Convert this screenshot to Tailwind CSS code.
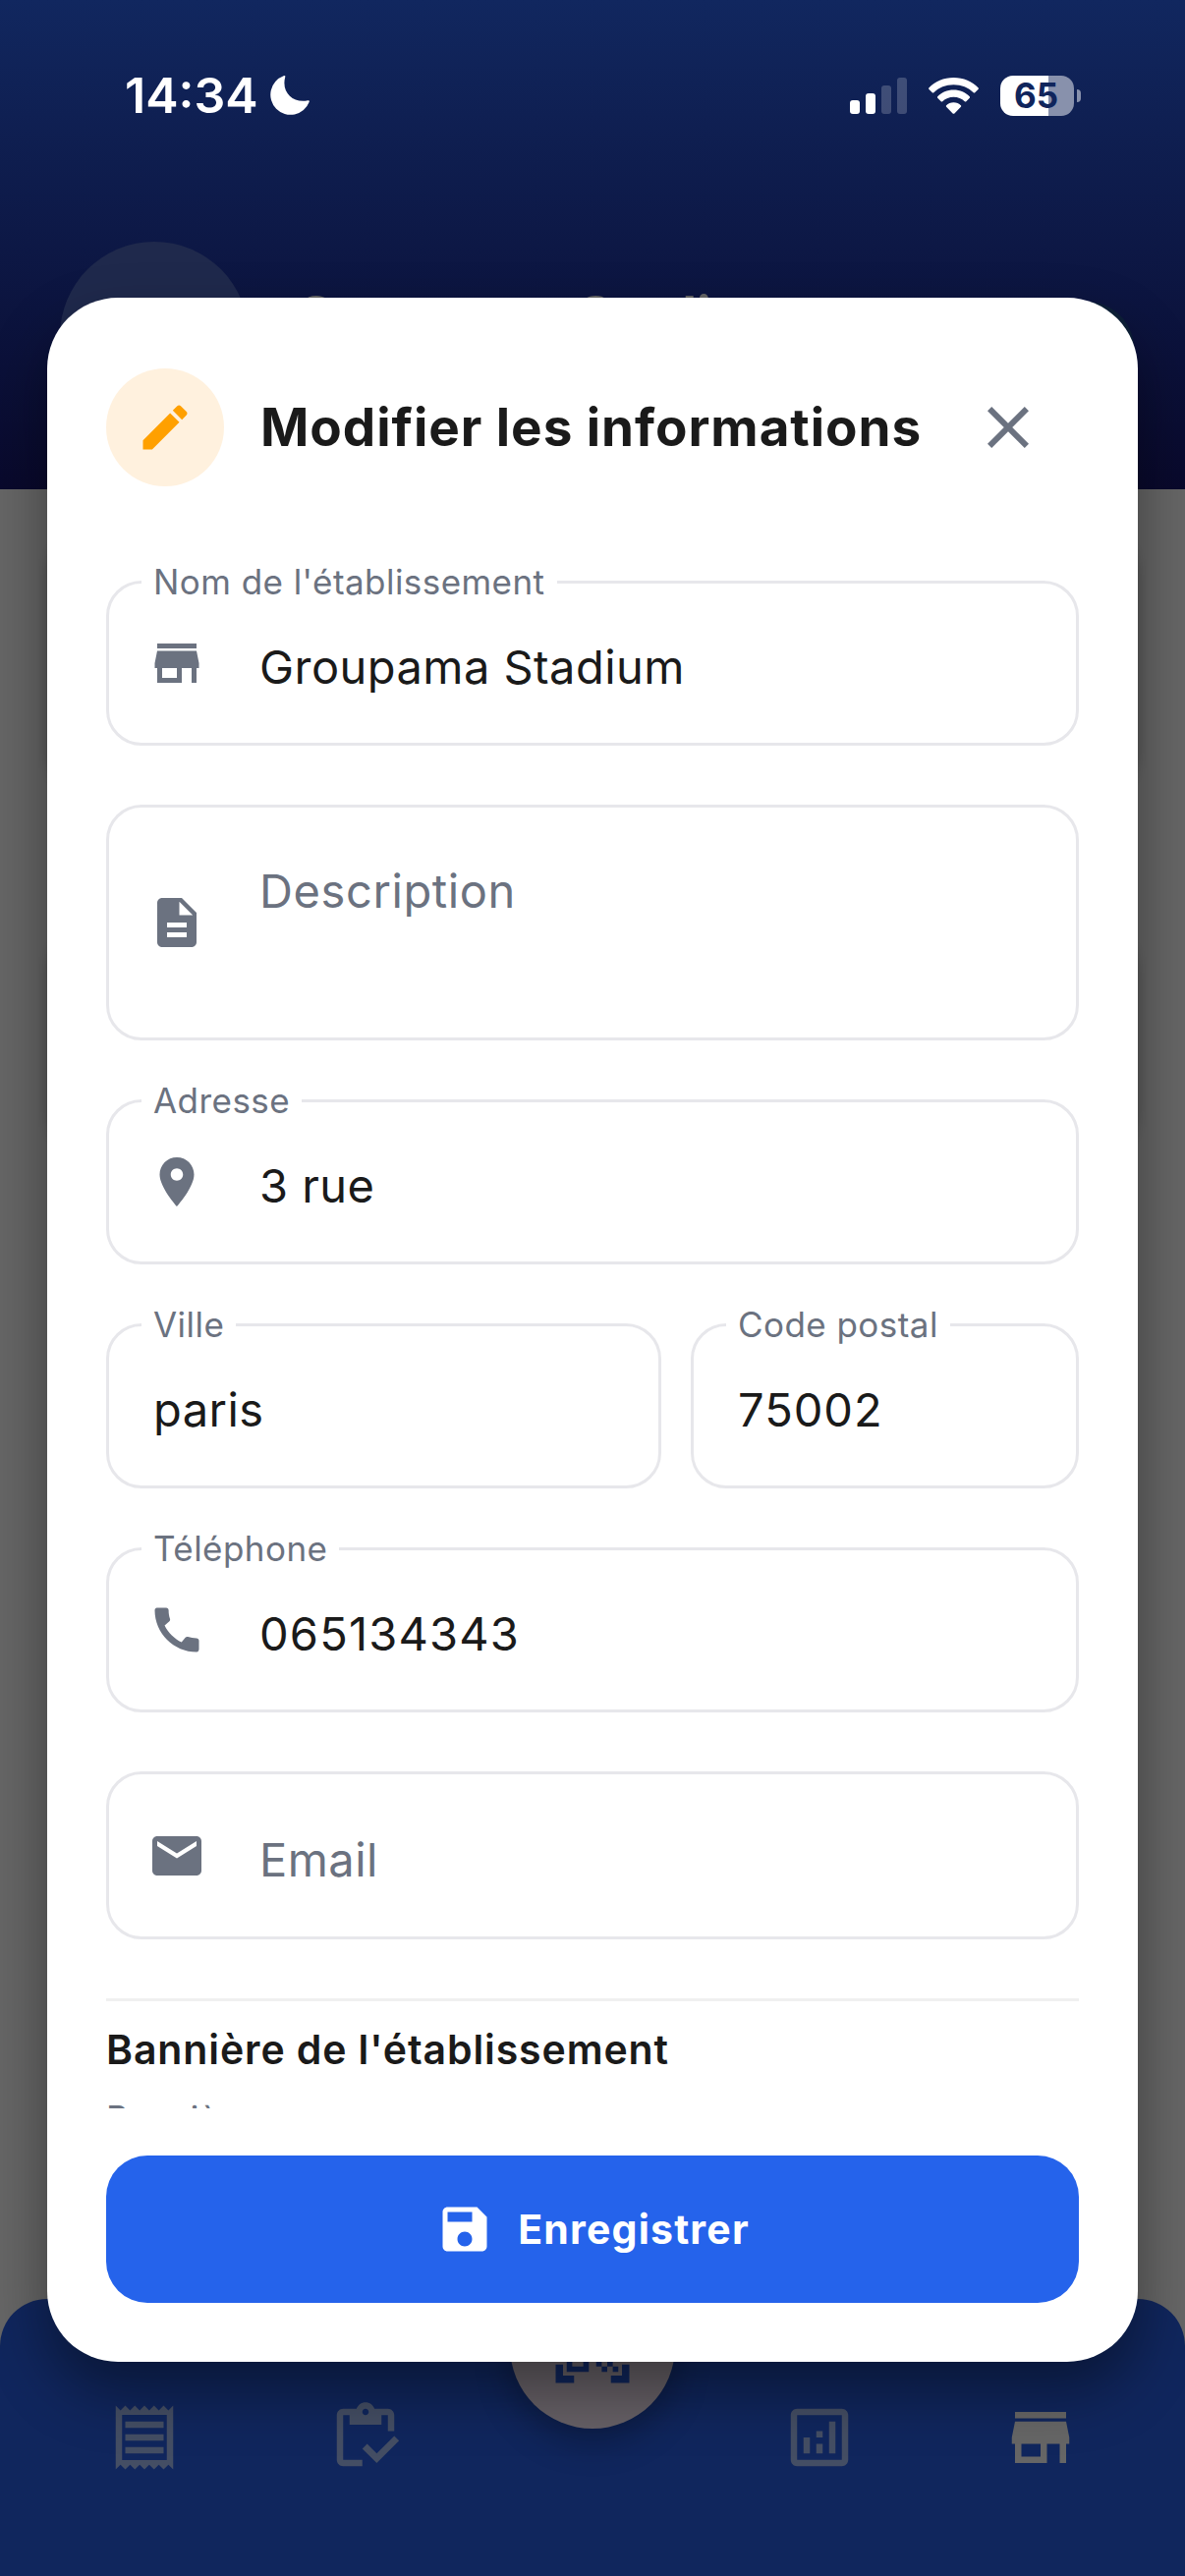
<!DOCTYPE html>
<html lang="fr">
<head>
    <meta charset="UTF-8">
    <meta name="viewport" content="width=device-width, initial-scale=1.0">
    <title>Modifier les informations</title>
    <script src="https://cdn.jsdelivr.net/npm/@tailwindcss/browser@4"></script>
</head>
<body class="relative w-[1206px] h-[2622px] overflow-hidden bg-[#666666] font-['Inter','Liberation_Sans',sans-serif]">
    <!-- Dimmed page behind the dialog -->
    <div class="flex h-full flex-col">
        <header class="h-[498px] shrink-0 bg-linear-to-b/srgb from-[#11275f] to-[#09092c]">
            <!-- Status bar -->
            <div class="flex h-[194px] items-center pl-[127px] pr-[106px] text-white">
                <span class="w-[148px] text-[50px] font-semibold leading-none">14:34</span>
                <svg class="h-10 w-10" viewBox="0 0 40 40" fill="currentColor"><path d="M15.200 1.500C15.800.2 14.800-.3 13.600.3A20.400 20.400 0 1 0 39.700 26.800c.5-1.200-.2-1.900-1.400-1.600C24 28.500 11 17.500 15.200 1.500z"/></svg>
                <div class="ml-auto flex items-center">
                    <div class="mr-[22px] flex h-[37px] items-end gap-[6px]">
                        <span class="h-[14px] w-[10px] rounded-[3px] bg-white"></span>
                        <span class="h-[21px] w-[10px] rounded-[3px] bg-white"></span>
                        <span class="h-[29px] w-[10px] rounded-[3px] bg-white/20"></span>
                        <span class="h-[37px] w-[10px] rounded-[3px] bg-white/20"></span>
                    </div>
                    <svg class="mr-[22px] h-[37px] w-[51px]" viewBox="0 0 51 37" fill="currentColor">
                        <path d="M25.500 0C35.500 0 44.500 4 50.500 10.300c.6.6.6 1 0 1.600l-3.300 3.300c-.5.5-1 .5-1.500 0C40.500 10.300 33.500 7.300 25.500 7.300S10.500 10.300 5.300 15.200c-.5.5-1 .5-1.500 0L.5 11.900c-.6-.6-.6-1 0-1.600C6.500 4 15.500 0 25.500 0z"/>
                        <path d="M25.500 12.500c6.500 0 12.300 2.600 16.300 6.700.5.500.5 1 0 1.500l-3.500 3.500c-.5.500-1 .5-1.500 0-3-2.700-6.900-4.400-11.300-4.400s-8.300 1.700-11.300 4.400c-.5.500-1 .5-1.500 0l-3.500-3.500c-.5-.5-.5-1 0-1.500 4-4.100 9.800-6.700 16.300-6.700z"/>
                        <path d="M25.500 25.300c3 0 5.600 1.100 7.400 2.900.5.500.5 1 0 1.500l-6.500 6.700c-.6.600-1.200.6-1.800 0l-6.500-6.700c-.5-.5-.5-1 0-1.500 1.800-1.800 4.400-2.900 7.400-2.900z"/>
                    </svg>
                    <div class="flex h-[41px] w-[75px] items-center justify-center rounded-[13px] bg-linear-to-r/srgb from-white from-[65%] to-[#8891ac] to-[65%] pr-[2px] text-[35px] font-bold leading-none text-[#10255c]">65</div>
                    <span class="ml-[3px] h-[13px] w-[4px] rounded-r-full bg-[#8891ac]"></span>
                </div>
            </div>
            <!-- Establishment header -->
            <div class="flex items-center pl-[61px] pr-[52px] pt-[52px]">
                <div class="h-[192px] w-[192px] rounded-full bg-[#1f294c]"></div>
                <div class="ml-[48px] mt-[-42px] text-[54px] font-bold leading-none text-[#666666]">Groupama Stadium</div>
                <div class="ml-auto mt-[26px] h-[96px] w-[96px] rounded-full bg-[#0d2038]"></div>
            </div>
        </header>

        <!-- Content cards -->
        <main class="flex flex-1 flex-col px-[48px] pt-[40px]">
            <div class="h-[275px] rounded-[48px] bg-[#666666] shadow-[0_0_12px_rgba(0,0,0,0.2)]"></div>
            <div class="mt-[130px] h-[235px] rounded-[48px] bg-[#666666] shadow-[0_0_12px_rgba(0,0,0,0.2)]"></div>
        </main>

        <nav class="relative h-[282px] shrink-0 rounded-t-[48px] bg-[#10265d]">
            <div class="flex px-[108px] pt-[102px] text-[#444e64]">
                <svg class="h-[78px] w-[78px]" viewBox="0 0 24 24" fill="currentColor"><path d="M19.500 3.500L18 2l-1.500 1.500L15 2l-1.500 1.500L12 2l-1.500 1.500L9 2 7.500 3.500 6 2 4.500 3.500 3 2v20l1.500-1.500L6 22l1.500-1.500L9 22l1.500-1.500L12 22l1.500-1.500L15 22l1.500-1.500L18 22l1.500-1.500L21 22V2l-1.500 1.500zM19 19.090H5V4.910h14v14.180zM6 15h12v2H6zm0-4h12v2H6zm0-4h12v2H6z"/></svg>
                <svg class="ml-[147px] h-[78px] w-[78px]" viewBox="0 0 24 24" fill="currentColor"><path d="M5 5h2v3h10V5h2v5h2V5c0-1.100-.9-2-2-2h-4.180C14.400 1.840 13.300 1 12 1s-2.400.84-2.820 2H5c-1.100 0-2 .9-2 2v14c0 1.100.9 2 2 2h6v-2H5V5zm7-2c.55 0 1 .45 1 1s-.45 1-1 1-1-.45-1-1 .45-1 1-1z"/><path d="M21 11.500L15.510 17l-3.010-3-1.500 1.500 4.510 4.500 7-7z"/></svg>
                <svg class="ml-auto h-[78px] w-[78px]" viewBox="0 0 24 24" fill="currentColor"><path d="M19 3H5c-1.100 0-2 .9-2 2v14c0 1.100.9 2 2 2h14c1.100 0 2-.9 2-2V5c0-1.100-.9-2-2-2zm0 16H5V5h14v14z"/><path d="M7 12h2v5H7zM15 7h2v10h-2zM11 14h2v3h-2zM11 10h2v2h-2z"/></svg>
                <svg class="ml-[147px] h-[78px] w-[78px] text-[#666666]" viewBox="0 0 24 24" fill="currentColor"><path d="M20 4H4v2h16V4zm1 10v-2l-1-5H4l-1 5v2h1v6h10v-6h4v6h2v-6h1zm-9 4H6v-4h6v4z"/></svg>
            </div>
            <!-- Scan button -->
            <div class="absolute left-1/2 top-[-36px] flex h-[168px] w-[168px] -translate-x-1/2 items-center justify-center rounded-full bg-[#666066] text-[#10265d] shadow-[0_12px_36px_rgba(0,0,0,0.3)]">
                <svg class="h-[90px] w-[90px]" viewBox="0 0 24 24" fill="currentColor"><path d="M9.500 6.500v3h-3v-3h3M11 5H5v6h6V5zM9.500 14.500v3h-3v-3h3M11 13H5v6h6v-6zM17.500 6.500v3h-3v-3h3M19 5h-6v6h6V5zM13 13h1.500v1.500H13zM14.500 14.500H16V16h-1.500zM16 13h1.500v1.500H16zM13 16h1.500v1.500H13zM14.500 17.500H16V19h-1.500zM16 16h1.500v1.500H16zM17.500 14.500H19V16h-1.500zM17.500 17.500H19V19h-1.500zM22 7h-2V4h-3V2h5v5zM22 22v-5h-2v3h-3v2h5zM2 22h5v-2H4v-3H2v5zM2 2v5h2V4h3V2H2z"/></svg>
            </div>
        </nav>
    </div>

    <!-- Edit dialog -->
    <div class="absolute left-[48px] top-[303px] flex h-[2101px] w-[1110px] flex-col rounded-[72px] bg-white px-[60px] pt-[72px] pb-[60px] shadow-[0_30px_60px_rgba(0,0,0,0.4)]">
        <div class="flex items-center">
            <div class="flex h-[120px] w-[120px] items-center justify-center rounded-full bg-[#fff1de]">
                <svg class="h-[60px] w-[60px] text-[#ffa000]" viewBox="0 0 24 24" fill="currentColor"><path d="M3 17.250V21h3.750L17.810 9.940l-3.750-3.750L3 17.250zM20.710 7.040c.39-.39.39-1.020 0-1.410l-2.340-2.340c-.39-.39-1.020-.39-1.410 0l-1.830 1.830 3.750 3.750 1.830-1.830z"/></svg>
            </div>
            <h1 class="ml-[37px] whitespace-nowrap text-[53px] font-bold leading-none tracking-[0.95px] text-[#1a1a1a]">Modifier les informations</h1>
            <svg class="ml-auto mr-9 h-[72px] w-[72px] text-[#6b7280]" viewBox="0 0 24 24" fill="currentColor"><path d="M19 6.410L17.590 5 12 10.590 6.410 5 5 6.410 10.590 12 5 17.590 6.410 19 12 13.410 17.590 19 19 17.590 13.410 12z"/></svg>
        </div>

        <div class="mt-[96px] flex h-[1555px] flex-col text-[47px] leading-none tracking-[0.45px] text-[#1a1a1a]">
            <div class="relative flex h-[168px] shrink-0 items-center rounded-[36px] border-[3px] border-[#e7e7eb] px-[39px]">
                <span class="absolute left-[33px] top-[-23px] bg-white px-[12px] text-[35px] leading-[42px] text-[#6b7280]">Nom de l'établissement</span>
                <svg class="h-[60px] w-[60px] text-[#6b7280]" viewBox="0 0 24 24" fill="currentColor"><path d="M20 4H4v2h16V4zm1 10v-2l-1-5H4l-1 5v2h1v6h10v-6h4v6h2v-6h1zm-9 4H6v-4h6v4z"/></svg>
                <span class="ml-[54px] pt-[6px]">Groupama Stadium</span>
            </div>

            <div class="mt-[60px] flex h-[240px] shrink-0 items-center rounded-[36px] border-[3px] border-[#e7e7eb] px-[39px]">
                <svg class="h-[60px] w-[60px] text-[#6b7280]" viewBox="0 0 24 24" fill="currentColor"><path d="M14 2H6c-1.100 0-1.990.9-1.990 2L4 20c0 1.100.89 2 1.990 2H18c1.100 0 2-.9 2-2V8l-6-6zm2 16H8v-2h8v2zm0-4H8v-2h8v2zm-3-5V3.500L18.500 9H13z"/></svg>
                <span class="ml-[54px] pb-[66px] tracking-[0.6px] text-[#6b7280]">Description</span>
            </div>

            <div class="relative mt-[60px] flex h-[168px] shrink-0 items-center rounded-[36px] border-[3px] border-[#e7e7eb] px-[39px]">
                <span class="absolute left-[33px] top-[-23px] bg-white px-[12px] text-[35px] leading-[42px] text-[#6b7280]">Adresse</span>
                <svg class="h-[60px] w-[60px] text-[#6b7280]" viewBox="0 0 24 24" fill="currentColor"><path d="M12 2C8.130 2 5 5.130 5 9c0 5.250 7 13 7 13s7-7.750 7-13c0-3.870-3.130-7-7-7zm0 9.500c-1.380 0-2.500-1.120-2.500-2.500s1.120-2.500 2.500-2.500 2.500 1.120 2.500 2.500-1.120 2.500-2.500 2.500z"/></svg>
                <span class="ml-[54px] pt-[6px]">3 rue</span>
            </div>

            <div class="mt-[60px] flex shrink-0 gap-[30px]">
                <div class="relative flex h-[168px] w-[565px] items-center rounded-[36px] border-[3px] border-[#e7e7eb] px-[45px]">
                    <span class="absolute left-[33px] top-[-23px] bg-white px-[12px] text-[35px] leading-[42px] text-[#6b7280]">Ville</span>
                    <span class="pt-[6px]">paris</span>
                </div>
                <div class="relative flex h-[168px] flex-1 items-center rounded-[36px] border-[3px] border-[#e7e7eb] px-[45px]">
                    <span class="absolute left-[33px] top-[-23px] bg-white px-[12px] text-[35px] leading-[42px] text-[#6b7280]">Code postal</span>
                    <span class="pt-[6px] tracking-[1px]">75002</span>
                </div>
            </div>

            <div class="relative mt-[60px] flex h-[168px] shrink-0 items-center rounded-[36px] border-[3px] border-[#e7e7eb] px-[39px]">
                <span class="absolute left-[33px] top-[-23px] bg-white px-[12px] text-[35px] leading-[42px] text-[#6b7280]">Téléphone</span>
                <svg class="h-[60px] w-[60px] text-[#6b7280]" viewBox="0 0 24 24" fill="currentColor"><path d="M20.010 15.380c-1.230 0-2.420-.2-3.530-.56-.35-.12-.74-.03-1.010.24l-1.570 1.970c-2.830-1.350-5.480-3.900-6.890-6.830l1.950-1.660c.27-.28.35-.67.24-1.020-.37-1.110-.56-2.300-.56-3.530 0-.54-.45-.99-.99-.99H4.190C3.650 3 3 3.240 3 3.990 3 13.280 10.730 21 20.010 21c.71 0 .99-.63.99-1.180v-3.450c0-.54-.45-.99-.99-.99z"/></svg>
                <span class="ml-[54px] pt-[6px] tracking-[1.2px]">065134343</span>
            </div>

            <div class="mt-[60px] flex h-[171px] shrink-0 items-center rounded-[36px] border-[3px] border-[#e7e7eb] px-[39px]">
                <svg class="h-[60px] w-[60px] text-[#6b7280]" viewBox="0 0 24 24" fill="currentColor"><path d="M20 4H4c-1.100 0-1.990.9-1.990 2L2 18c0 1.100.9 2 2 2h16c1.100 0 2-.9 2-2V6c0-1.100-.9-2-2-2zm0 4l-8 5-8-5V6l8 5 8-5v2z"/></svg>
                <span class="ml-[54px] pt-[7px] text-[#6b7280]">Email</span>
            </div>

            <!-- Banner section, scrolled under the save button -->
            <div class="mt-[60px] h-[112px] shrink-0 overflow-hidden border-t-[3px] border-[#f0f0f0]">
                <h2 class="mt-[25px] text-[41px] font-semibold leading-[48px] tracking-[0.9px]">Bannière de l'établissement</h2>
                <p class="mt-[25px] text-[35px] leading-[42px] text-[#6b7280]">Bannière</p>
            </div>
        </div>

        <button class="mt-auto flex h-[150px] shrink-0 items-center justify-center rounded-[42px] bg-[#2563eb] text-[41px] font-bold tracking-[1.2px] text-white">
            <svg class="h-[60px] w-[60px]" viewBox="0 0 24 24" fill="currentColor"><path d="M17 3H5c-1.110 0-2 .9-2 2v14c0 1.100.89 2 2 2h14c1.100 0 2-.9 2-2V7l-4-4zm-5 16c-1.660 0-3-1.340-3-3s1.340-3 3-3 3 1.340 3 3-1.340 3-3 3zm3-10H5V5h10v4z"/></svg>
            <span class="ml-[24px] pt-[2px]">Enregistrer</span>
        </button>
    </div>
</body>
</html>
